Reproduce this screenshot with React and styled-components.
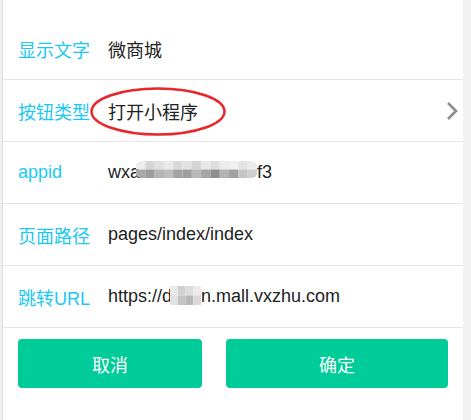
import React from 'react'
import styled, { createGlobalStyle } from 'styled-components'

const GlobalStyle = createGlobalStyle`
  html, body {
    margin: 0;
    padding: 0;
    background: #f2f2f2;
  }
  body {
    font-family: "Liberation Sans", "Noto Sans CJK SC", sans-serif;
  }
`

const Page = styled.div`
  display: flex;
  width: 471px;
  height: 420px;
  overflow: hidden;
  background: #f2f2f2;
`

const LeftEdge = styled.div`
  width: 2px;
  background: #f0f0f0;
  border-right: 1px solid #dddddd;
`

const Panel = styled.div`
  width: 460px;
  background: #fff;
  padding-top: 18px;
  display: flex;
  flex-direction: column;
`

const Row = styled.div`
  position: relative;
  display: flex;
  align-items: center;
  height: 61px;
  padding-left: 15px;
  border-bottom: 1px solid #e5e5e5;
  font-size: 18px;
`

const Label = styled.span`
  width: 90px;
  flex-shrink: 0;
  color: #1bc8f4;
`

const Value = styled.span`
  flex: 1;
  color: #222;
  display: flex;
  align-items: center;
  white-space: nowrap;
`

const Chevron = styled.svg`
  margin-right: 4px;
`

const Circle = styled.svg`
  position: absolute;
  left: 87px;
  top: 7px;
  pointer-events: none;
`

const Mosaic = styled.svg`
  display: block;
  flex-shrink: 0;
  margin: ${p => p.$m || '0'};
`

const Actions = styled.div`
  display: flex;
  gap: 24px;
  padding: 11px 15px 0;
`

const Button = styled.button`
  width: ${p => p.$w}px;
  height: 49px;
  border: none;
  border-radius: 4px;
  background: #00cc99;
  color: #fff;
  font-family: inherit;
  font-size: 18px;
  padding: 0;
`

const appidTop = ['#eeeeee', '#d6d6d6', '#e0e0e0', '#e9e9e9', '#d9d9d9', '#e3e3e3', '#d4d4d4', '#e8e8e8', '#dedede', '#ececec', '#efefef', '#e3e3e3', '#ebebeb']
const appidBottom = ['#a8a8a8', '#9c9c9c', '#b5b5b5', '#bdbdbd', '#a3a3a3', '#9f9f9f', '#b8b8b8', '#a5a5a5', '#8f8f8f', '#b3b3b3', '#a1a1a1', '#c4c4c4', '#cfcfcf']

const AppidMosaic = () => (
  <Mosaic $m='-6px 0 0 -4px' width='121' height='17' viewBox='0 0 121 17'>
    <clipPath id='appidClip'>
      <rect x='0' y='0' width='121' height='17' rx='5' />
    </clipPath>
    <g clipPath='url(#appidClip)'>
      {appidTop.map((c, i) => (
        <rect key={'t' + i} x={i * 9.3} y='0' width='9.4' height='8.5' fill={c} />
      ))}
      {appidBottom.map((c, i) => (
        <rect key={'b' + i} x={i * 9.3} y='8.5' width='9.4' height='8.5' fill={c} />
      ))}
    </g>
  </Mosaic>
)

const urlCols = [['#eaeaea', '#e2e2e2'], ['#d0d0d0', '#c4c4c4'], ['#dcdcdc', '#b8b8b8'], ['#ececec', '#d8d8d8']]

const UrlMosaic = () => (
  <Mosaic $m='-3px 0 0 -2px' width='31' height='19' viewBox='0 0 31 19'>
    {urlCols.map((col, i) => (
      <g key={i}>
        <rect x={i * 7.75} y='0' width='7.8' height='9.5' fill={col[0]} />
        <rect x={i * 7.75} y='9.5' width='7.8' height='9.5' fill={col[1]} />
      </g>
    ))}
  </Mosaic>
)

export default function App () {
  return (
    <Page>
      <GlobalStyle />
      <LeftEdge />
      <Panel>
        <Row>
          <Label>显示文字</Label>
          <Value>微商城</Value>
        </Row>
        <Row>
          <Label>按钮类型</Label>
          <Value>打开小程序</Value>
          <Chevron width='14' height='20' viewBox='0 0 14 20'>
            <polyline points='3,2 11,10 3,18' fill='none' stroke='#8e8e8e' strokeWidth='2.6' />
          </Chevron>
          <Circle width='136' height='49' viewBox='0 0 136 49'>
            <ellipse cx='68' cy='24.5' rx='66.5' ry='23' fill='none' stroke='#e8262b' strokeWidth='2.5' />
          </Circle>
        </Row>
        <Row>
          <Label>appid</Label>
          <Value>
            wxa<AppidMosaic />f3
          </Value>
        </Row>
        <Row>
          <Label>页面路径</Label>
          <Value>pages/index/index</Value>
        </Row>
        <Row>
          <Label>跳转URL</Label>
          <Value>
            https://d<UrlMosaic />n.mall.vxzhu.com
          </Value>
        </Row>
        <Actions>
          <Button $w={184}>取消</Button>
          <Button $w={222}>确定</Button>
        </Actions>
      </Panel>
    </Page>
  )
}
